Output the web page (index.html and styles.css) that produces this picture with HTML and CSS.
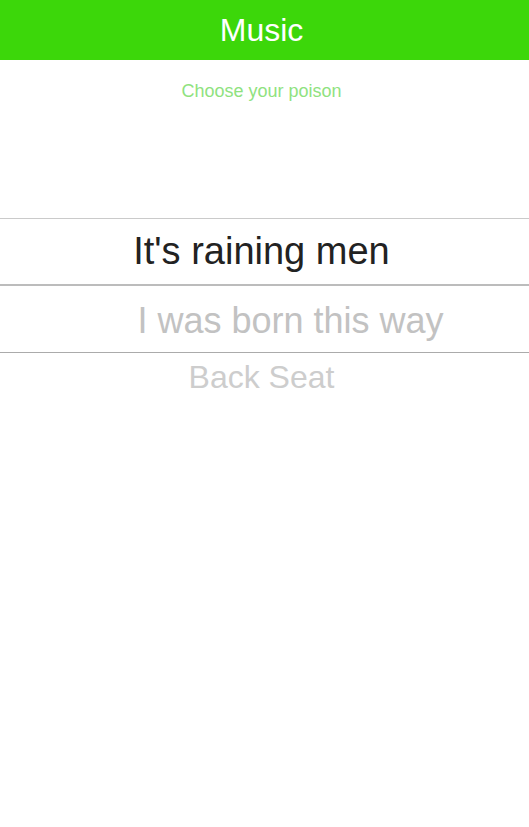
FILE: index.html
```html
<!DOCTYPE html>
<html>
<head>
<meta charset="utf-8">
<link rel="stylesheet" href="styles.css">
</head>
<body>
<header class="topbar">Music</header>
<p class="subtitle">Choose your poison</p>
<div class="picker">
  <div class="row row-selected">It's raining men</div>
  <div class="row row-next">I was born this way</div>
  <div class="row row-far">Back Seat</div>
</div>
</body>
</html>
```
FILE: styles.css
```css
html, body {
  margin: 0;
  padding: 0;
  background: #fff;
  font-family: "Liberation Sans", Arial, sans-serif;
}
.topbar {
  height: 60px;
  line-height: 60px;
  background: #3cd70a;
  color: #fff;
  font-size: 32px;
  text-align: center;
  padding-right: 6px;
}
.subtitle {
  margin: 0;
  padding-top: 21px;
  height: 158px;
  line-height: 20px;
  font-size: 18px;
  color: #8fe27f;
  text-align: center;
  box-sizing: border-box;
  padding-right: 6px;
}
.picker {
  display: flex;
  flex-direction: column;
}
.row {
  text-align: center;
  white-space: nowrap;
  padding-right: 6px;
}
.row-selected {
  border-top: 1px solid #cacaca;
  border-bottom: 2px solid #bcbcbc;
  height: 65px;
  line-height: 65px;
  font-size: 38px;
  color: #222;
}
.row-next {
  border-bottom: 1px solid #ababab;
  height: 62px;
  padding-top: 4px;
  line-height: 62px;
  font-size: 36px;
  color: #c2c2c2;
  padding-left: 58px;
}
.row-far {
  line-height: 48px;
  font-size: 32px;
  color: #cdcdcd;
}
```
